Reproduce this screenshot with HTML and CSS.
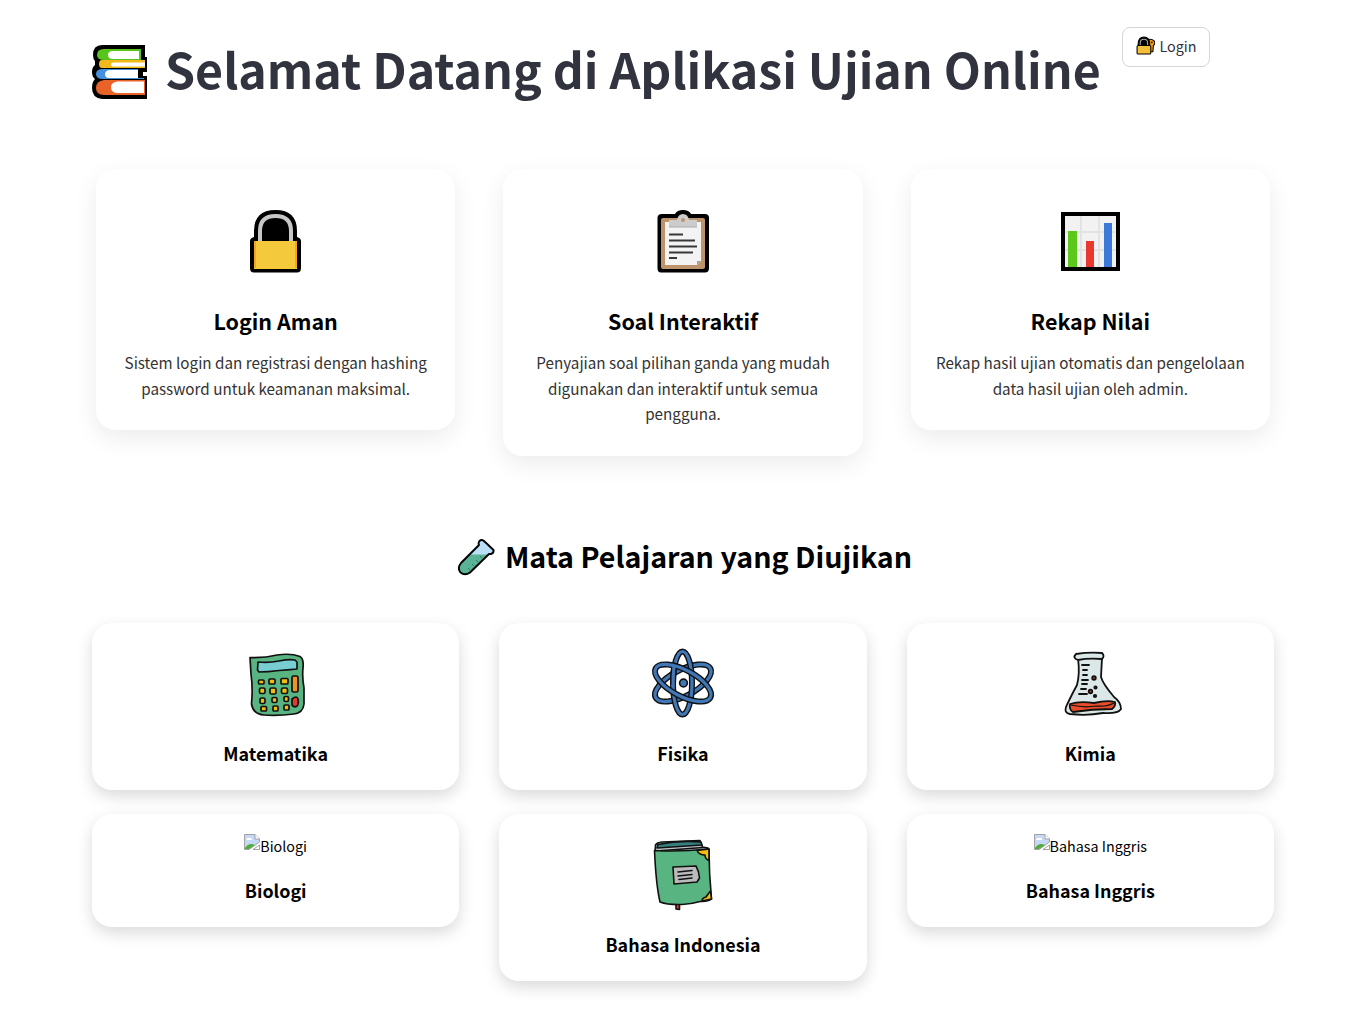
FILE: index.html
```html
<!DOCTYPE html>
<html lang="id">
<head>
<meta charset="utf-8">
<title>Aplikasi Ujian Online</title>
<link rel="stylesheet" href="styles.css">
</head>
<body>
<main class="page">
  <header class="header">
    <h1 class="title">
      <svg class="books" viewBox="0 0 56 54"><path d="M10 0H53V12H55V27H51V31H55V54H10Q0 53 0 43Q0 37 3 34Q0 32 0 27Q0 22 3 20V16Q1 14 1 10Q1 0 10 0Z" fill="#000"/><path d="M49 4H12Q5 4 5 10Q5 15 12 15H49Z" fill="#58c51d"/><path d="M47 6H21Q16 6 16 10Q16 14 21 14H47Z" fill="#fff"/><path d="M53 15H10Q7 15 7 19Q7 23 10 23H53Z" fill="#f2b91b"/><path d="M53 17.500H22Q19 17.500 19 19.500Q19 21.500 22 21.500H53Z" fill="#fff"/><path d="M46 24H11Q4 24 4 29Q4 34 11 34H52V33H46Z" fill="#4592dc"/><path d="M46 25H17Q13 26 13 29Q13 33 17 33H46Z" fill="#fff"/><path d="M53 35H12Q4 36 4 43Q4 50 12 50H53Z" fill="#e96329"/><path d="M52 36.500H26Q19 37 19 42Q19 48 26 48H52Z" fill="#fff"/></svg>
      <span>Selamat Datang di Aplikasi Ujian Online</span>
    </h1>
    <button class="login">
      <svg class="login-icon" viewBox="0 0 18 18"><path d="M11 4Q14 2 17 4.500Q19 7 16.500 9L16 15H10V5Z" fill="#f59a11" stroke="#000"/><path d="M2 8Q2 1 7.500 1Q13 1 13 8Z" fill="#000" stroke="#000"/><path d="M4 9V6.500Q4 3 7.500 3Q11 3 11 6.500V9" fill="none" stroke="#aaa"/><rect x="1" y="9" width="13" height="8" rx="1" fill="#f3bf37" stroke="#000"/><circle cx="15" cy="6" r=".8"/></svg>
      <span>Login</span>
    </button>
  </header>

  <section class="grid features">
    <article class="feature">
      <svg class="feature-icon" viewBox="1 0 80 80"><path d="M15 41Q15 38 19 37V31Q19 10 40.500 10Q62 10 62 31V37Q66 38 66 41V68Q66 72.500 62 72.500H19Q15 72.500 15 68Z"/><path d="M25 41V31Q25 16 40.500 16Q56 16 56 31V41" fill="none" stroke="#c7c7c7" stroke-width="4"/><rect x="19" y="41" width="43" height="28" fill="#f4c93b"/><path d="M20 41V68M61 41V68" stroke="#f5a51e" stroke-width="2"/></svg>
      <h3 class="feature-title">Login Aman</h3>
      <p class="feature-text">Sistem login dan registrasi dengan hashing<br>password untuk keamanan maksimal.</p>
    </article>
    <article class="feature">
      <svg class="feature-icon" viewBox="0 0 80 80"><path d="M19 14H32Q34 10 40 10Q46 10 48 14H62Q66 14 66 18V68Q66 72.500 62 72.500H18Q14.500 72.500 14.500 68V18Q14.500 14 19 14Z"/><rect x="18" y="18" width="44" height="51" rx="2" fill="#bd936b"/><path d="M22 22H58V61L54 65H22Z" fill="#f3f3f3"/><path d="M54 65V61H58Z" fill="#a99d92"/><path d="M26 27V20H34Q35 14 40 14Q45 14 46 20H54V27Z" fill="#ccc"/><circle cx="40" cy="20" r="2" fill="#bd936b"/><path d="M26 27H54" stroke="#aaa"/><path d="M26 34.500H40M26 40.500H52M26 46.500H54M26 52.500H50M26 58H34" stroke="#383838" stroke-width="2"/></svg>
      <h3 class="feature-title">Soal Interaktif</h3>
      <p class="feature-text">Penyajian soal pilihan ganda yang mudah<br>digunakan dan interaktif untuk semua<br>pengguna.</p>
    </article>
    <article class="feature">
      <svg class="feature-icon" viewBox="0 0 80 80"><rect x="11" y="12" width="59" height="59"/><rect x="15" y="16" width="51" height="51" fill="#f2f2f2"/><path d="M31 16V67M49 16V67M15 32H66M15 50H66" stroke="#e3e3e3" stroke-width="2"/><path d="M18 31H27V67H18Z" fill="#5cc81b"/><path d="M36 41H44V67H36Z" fill="#e9392f"/><path d="M54 23H62V67H54Z" fill="#3d79d8"/></svg>
      <h3 class="feature-title">Rekap Nilai</h3>
      <p class="feature-text">Rekap hasil ujian otomatis dan pengelolaan<br>data hasil ujian oleh admin.</p>
    </article>
  </section>

  <h2 class="section-title">
    <svg class="tube" viewBox="0 0 37 37"><path d="M21 6L3 24Q-1 29 2.500 33.500Q7 37 12 33.500L31 15L33 15Q36 14 35.500 11L26 2Q23.500 0 21.500 2Q20 4 21 6Z" fill="#b9def5"/><path d="M12 15.500H30.500L12 33.500Q7 37 2.500 33.500Q-1 29 3 24Z" fill="#5ab397"/><path d="M21 6L3 24Q-1 29 2.500 33.500Q7 37 12 33.500L31 15L33 15Q36 14 35.500 11L26 2Q23.500 0 21.500 2Q20 4 21 6Z" fill="none" stroke="#000" stroke-width="1.900" stroke-linejoin="round"/><path d="M22 17L24 19M18 21L20 23M14 25L16 27M10 29L12 31" stroke="#347e68"/></svg>
    <span>Mata Pelajaran yang Diujikan</span>
  </h2>

  <section class="grid subjects">
    <article class="subject">
      <svg class="subject-icon" viewBox="0 0 70 70"><g stroke="#111" stroke-width="1.700" stroke-linejoin="round"><path d="M9 9.500Q24 10 36 7Q50 5 59 8.500Q63 11 62 20Q61 29 63 40L63 56Q62 65 53 66Q37 68 23 67Q12 66 10.500 56Q12 40 10 26Z" fill="#58b581"/><path d="M17 14Q28 15 38 13Q48 11 54 12L56 14V21Q46 22 38 22.500Q27 24 18 24L16.500 22Z" fill="#77cdd2"/><rect x="51" y="28" width="6" height="16" rx="1.500" fill="#ee9426"/><path d="M51 51Q56 47 57 51Q58 56 56 58Q53 60 51 57Z" fill="#df3d29"/><g fill="#efbc13"><rect x="17.500" y="32" width="5.500" height="4" rx="1"/><rect x="28" y="31" width="6" height="5" rx="1"/><rect x="40" y="30.500" width="7" height="5.500" rx="1"/><rect x="18.500" y="40" width="5.500" height="5.500" rx="1.500"/><rect x="29" y="40" width="6" height="6" rx="1.500"/><rect x="40.500" y="40" width="6" height="5.500" rx="1.500"/><rect x="19" y="50" width="5" height="5.500" rx="1.500"/><rect x="31" y="49.500" width="5" height="5" rx="1.500"/><rect x="43" y="48.500" width="4.500" height="5" rx="1.500"/><rect x="20" y="58.500" width="5.500" height="4.500" rx="1"/><rect x="32" y="58" width="5" height="5" rx="1"/><rect x="43" y="57" width="5" height="5" rx="1"/></g></g></svg>
      <h4 class="subject-title">Matematika</h4>
    </article>
    <article class="subject">
      <svg class="subject-icon" viewBox="0 0 70 70"><g fill="none" stroke="#111" stroke-width="6"><ellipse cx="35" cy="35" rx="13" ry="31" transform="rotate(62 35 35)"/><ellipse cx="35" cy="35" rx="13" ry="31" transform="rotate(62 35 35)" stroke="#4077b6" stroke-width="3.200"/><ellipse cx="34.500" cy="35" rx="9.500" ry="31.500"/><ellipse cx="34.500" cy="35" rx="9.500" ry="31.500" stroke="#4077b6" stroke-width="3.200"/><ellipse cx="35" cy="35" rx="13" ry="31" transform="rotate(-62 35 35)"/><ellipse cx="35" cy="35" rx="13" ry="31" transform="rotate(-62 35 35)" stroke="#4077b6" stroke-width="3.200"/><path d="M26 20Q25 28 25 37"/><path d="M26 18Q25 28 25 39" stroke="#4077b6" stroke-width="3.200"/></g><circle cx="35.500" cy="35" r="3.900" fill="#4077b6" stroke="#111" stroke-width="1.600"/></svg>
      <h4 class="subject-title">Fisika</h4>
    </article>
    <article class="subject">
      <svg class="subject-icon" viewBox="-1 0 70 70"><g stroke="#111" stroke-width="1.800" stroke-linejoin="round" stroke-linecap="round"><path d="M22 10Q24 26 21 37Q14 50 10 59Q8 65 14 66Q31 68 47 65Q62 66 65 61Q65 54 58 49Q47 36 45 29L46 10Z" fill="#dbe8e7"/><path d="M20 6Q33 4 46 5Q49 8 46 11Q32 10 22 12Q16 10 20 6Z" fill="#dbe8e7"/><path d="M14 56Q23 53 38 55Q51 52 59 54Q60 58 56 61Q36 61 17 64Q13 62 14 56Z" fill="#e94c29"/><path d="M15 57Q28 60 40 58Q51 59 58 55" fill="none" stroke-width="1.200"/><path d="M26 17H33M27 22H31M27 27H31M26 32H32M26 36H31M25 41H30M23 46H31" fill="none"/><circle cx="38" cy="30" r="1.800" fill="#a63b25"/><circle cx="39.500" cy="39.500" r="1.200" fill="#666"/><circle cx="34.500" cy="43.500" r="1.800" fill="#a63b25"/><circle cx="39" cy="48" r="1.200" fill="#666"/></g></svg>
      <h4 class="subject-title">Kimia</h4>
    </article>
    <article class="subject">
      <span class="missing"><svg class="broken" viewBox="0 0 16 16"><path d="M.5 .5H11L15.500 5V8L5 15.500H.5Z" fill="#c5d8f5" stroke="#a2a2a2"/><path d="M11 .5V5H15.500" fill="#fff" stroke="#a2a2a2"/><path d="M2 6Q3 3 5 4Q8 3 8 6Z" fill="#fff"/><path d="M1 14Q5 8 11 11L5 15H1Z" fill="#51ad39"/><path d="M9 15.500L15.500 11V15.500Z" fill="#fff" stroke="#a2a2a2"/></svg>Biologi</span>
      <h4 class="subject-title">Biologi</h4>
    </article>
    <article class="subject">
      <svg class="subject-icon book" viewBox="0 0 70 70"><g stroke="#111" stroke-width="1.600" stroke-linejoin="round" stroke-linecap="round"><path d="M28 65L31.500 64.500V70.500L28 70Z" fill="#db3b2c"/><path d="M7 14L7.500 6Q9 3.500 14 3L52 1.500L54.500 8L60 9L59 20L8 18Z" fill="#b8c5c7"/><path d="M10 5.500Q31 1 53 3L54 6L9 9Z" fill="#358181"/><path d="M8 12L55 8.500" fill="none"/><path d="M6.500 11.500Q31 13 61 10Q61 34 63.500 60Q60 63 52 62.500Q44 65 34 65.500Q20 66 12 63Q8 46 6.500 11.500Z" fill="#58b581"/><path d="M49 11.500L61 10L61 21.500Q57 20 57 16Q51 16 49 11.500Z" fill="#f5bd14"/><path d="M54 62Q54 59 58 58Q60 55 62.500 52L63.500 60Z" fill="#f5bd14"/><path d="M25 28L48 27Q51 32 51.500 39L49 43L26 45Z" fill="#bbb"/><path d="M30 33L44 31.500M30 37L44 35.500M31 40.500L44 39" fill="none"/></g></svg>
      <h4 class="subject-title">Bahasa Indonesia</h4>
    </article>
    <article class="subject">
      <span class="missing"><svg class="broken" viewBox="0 0 16 16"><path d="M.5 .5H11L15.500 5V8L5 15.500H.5Z" fill="#c5d8f5" stroke="#a2a2a2"/><path d="M11 .5V5H15.500" fill="#fff" stroke="#a2a2a2"/><path d="M2 6Q3 3 5 4Q8 3 8 6Z" fill="#fff"/><path d="M1 14Q5 8 11 11L5 15H1Z" fill="#51ad39"/><path d="M9 15.500L15.500 11V15.500Z" fill="#fff" stroke="#a2a2a2"/></svg>Bahasa Inggris</span>
      <h4 class="subject-title">Bahasa Inggris</h4>
    </article>
  </section>
</main>
</body>
</html>
```
FILE: styles.css
```css
* { box-sizing: border-box; }
body {
  margin: 0;
  background: #fff;
  color: #000;
  font-family: "Noto Sans CJK SC", "Noto Sans", sans-serif;
  font-size: 14.32px;
}
h1, h2, h3, h4, p { margin: 0; }
svg { display: block; flex: none; }
.page { height: 1018px; padding: 27px 85px 0 92px; }
.header { display: flex; align-items: flex-start; height: 142px; }
.title {
  display: flex;
  align-items: center;
  width: 1030px;
  height: 90px;
  color: #31333f;
  font-size: 48.25px;
  line-height: 82px;
  white-space: nowrap;
}
.books { width: 56px; height: 54px; margin-right: 17px; }
.title span { height: 90px; }
.login {
  display: flex;
  align-items: center;
  justify-content: center;
  gap: 5px;
  width: 88px;
  height: 40px;
  padding: 0 0 3px;
  border: 1px solid #d6d6d9;
  border-radius: 8px;
  background: #fff;
  color: #31333f;
  font: inherit;
}
.login-icon { width: 19px; height: 19px; }
.grid {
  display: grid;
  grid-template-columns: repeat(3, 1fr);
  align-items: start;
  column-gap: 40px;
}
.features { height: 344px; }
.feature {
  display: flex;
  flex-direction: column;
  align-items: center;
  margin: 0 4px;
  padding: 31px 20px 29px;
  border-radius: 20px;
  background: #fff;
  box-shadow: 0 8px 24px rgba(0, 0, 0, .08);
  text-align: center;
}
.feature-icon { width: 80px; height: 80px; }
.feature-title { margin-top: 23px; font-size: 21.48px; line-height: 36px; }
.feature-text {
  margin-top: 11.400px;
  color: #333;
  font-size: 15.22px;
  line-height: 25.5px;
  white-space: nowrap;
}
.section-title {
  display: flex;
  align-items: center;
  justify-content: center;
  gap: 10px;
  height: 88px;
  margin-bottom: 22px;
  padding-left: 4px;
  font-size: 28.64px;
  line-height: 86px;
}
.section-title span { height: 88px; }
.tube { width: 37px; height: 37px; }
.subjects { row-gap: 24px; }
.subject {
  display: flex;
  flex-direction: column;
  align-items: center;
  padding: 25px 20px 21px;
  border-radius: 20px;
  background: #fff;
  box-shadow: 0 6px 16px rgba(0, 0, 0, .15);
}
.subject-icon { width: 70px; height: 70px; }
.book { overflow: visible; }
.subject-title { margin-top: 20px; font-size: 17.9px; line-height: 31px; }
.missing {
  display: flex;
  height: 16px;
  margin-top: -5px;
  line-height: 24px;
}
.broken { width: 16px; height: 16px; }
.missing + .subject-title { margin-top: 25px; }
```
